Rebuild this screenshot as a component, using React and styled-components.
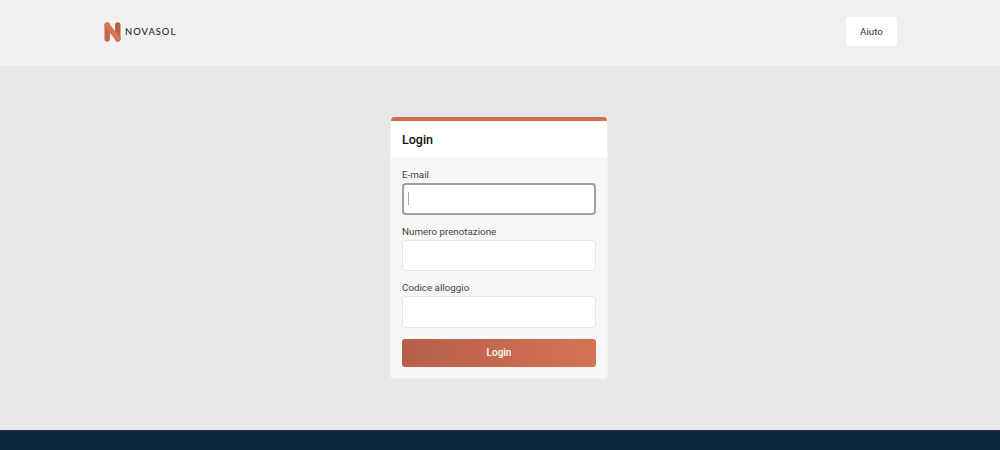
import React from 'react'
import styled, { createGlobalStyle } from 'styled-components'

const Global = createGlobalStyle`
  html, body { margin: 0; padding: 0; }
  body {
    background: #e7e7e7;
    font-family: Roboto, "Liberation Sans", sans-serif;
    color: #222;
  }
  * { box-sizing: border-box; }
`

const Page = styled.div`
  height: 450px;
  display: flex;
  flex-direction: column;
  overflow: hidden;
`

const Header = styled.header`
  height: 66px;
  flex: none;
  background: #f0f0f0;
  padding: 17px 103px 0 104px;
  display: flex;
  justify-content: space-between;
  align-items: flex-start;
`

const Brand = styled.div`
  display: flex;
  align-items: center;
  gap: 4px;
  height: 29px;
`

const BrandName = styled.span`
  font-family: Lato, Roboto, sans-serif;
  font-size: 9.4px;
  font-weight: 500;
  letter-spacing: 1px;
  color: #1d2b3d;
`

const HelpButton = styled.button`
  width: 51px;
  height: 29px;
  border: 0;
  border-radius: 3px;
  background: #fff;
  font: 400 9.8px Roboto, sans-serif;
  color: #333;
  padding: 0;
`

const Main = styled.main`
  flex: 1;
  display: flex;
  justify-content: center;
  padding: 51px 2px 0 0;
`

const Card = styled.section`
  width: 218px;
  height: 262px;
  background: #f7f7f7;
  border: 1px solid #f1f0ea;
  border-top: 0;
  border-radius: 4px;
  overflow: hidden;
`

const CardHead = styled.div`
  height: 40px;
  background: #fff;
  border-top: 4px solid #d4704f;
  padding: 0 0 0 11px;
  display: flex;
  align-items: center;
`

const Title = styled.h1`
  margin: 0;
  font-size: 12.5px;
  font-weight: 500;
  color: #111;
`

const Form = styled.form`
  padding: 11px 11px 0;
  display: flex;
  flex-direction: column;
`

const Field = styled.label`
  display: block;
  height: 56.5px;
  font-size: 9.8px;
  line-height: 13px;
  color: #444;
`

const Input = styled.div`
  margin-top: 2px;
  height: 31.5px;
  background: #fff;
  border: ${p => (p.$focused ? '2px solid #a0a0a0' : '1px solid #e4e4e4')};
  border-radius: 4px;
  display: flex;
  align-items: center;
  padding-left: 4px;
`

const Caret = styled.span`
  width: 1px;
  height: 13px;
  background: #aaa;
`

const Submit = styled.button`
  margin-top: 1px;
  height: 28px;
  border: 0;
  border-radius: 3px;
  background: linear-gradient(90deg, #b65f49, #d47355);
  color: #fff;
  font: 500 10px Roboto, sans-serif;
  padding: 0;
`

const Footer = styled.footer`
  height: 20px;
  flex: none;
  background: #0c2840;
  border-top: 1px solid #2b2a45;
`

function Logo() {
  return (
    <svg width="17" height="20" viewBox="0 0 17 20" aria-hidden="true">
      <path d="M3.2 3 L3.2 17" fill="none" stroke="#c2664c" strokeWidth="5.4" strokeLinecap="round" />
      <path d="M13.8 3 L13.8 17" fill="none" stroke="#b65f49" strokeWidth="5.4" strokeLinecap="round" />
      <path d="M3.2 3.4 L13.8 16.6" fill="none" stroke="#d9764f" strokeWidth="5.4" strokeLinecap="round" />
    </svg>
  )
}

export default function App() {
  return (
    <Page>
      <Global />
      <Header>
        <Brand>
          <Logo />
          <BrandName>NOVASOL</BrandName>
        </Brand>
        <HelpButton>Aiuto</HelpButton>
      </Header>
      <Main>
        <Card>
          <CardHead>
            <Title>Login</Title>
          </CardHead>
          <Form>
            <Field>
              E-mail
              <Input $focused><Caret /></Input>
            </Field>
            <Field>
              Numero prenotazione
              <Input />
            </Field>
            <Field>
              Codice alloggio
              <Input />
            </Field>
            <Submit type="button">Login</Submit>
          </Form>
        </Card>
      </Main>
      <Footer />
    </Page>
  )
}
